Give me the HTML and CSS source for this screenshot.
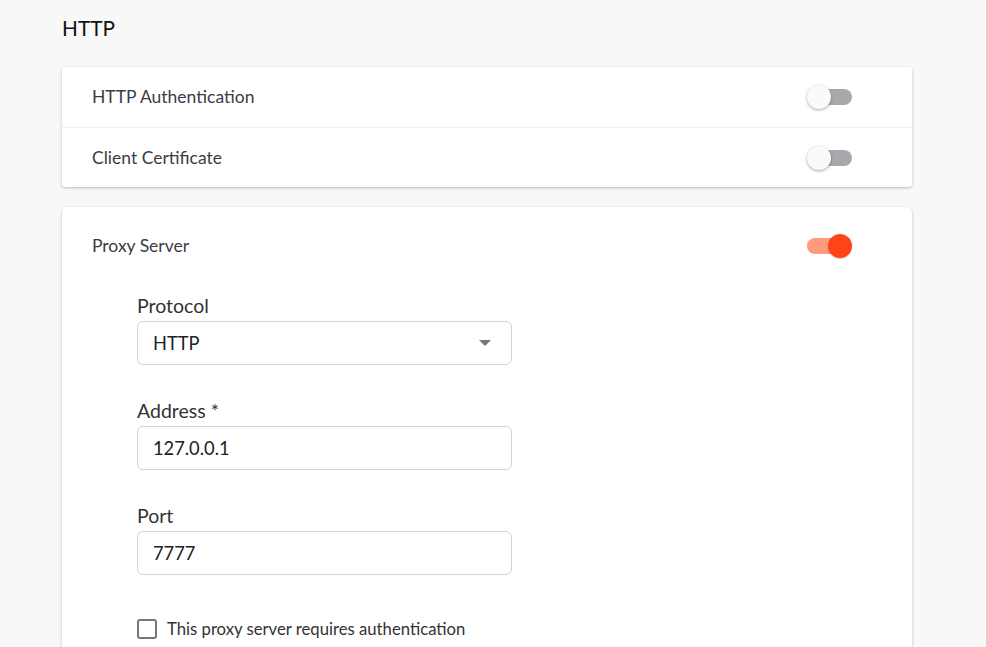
FILE: index.html
```html
<!DOCTYPE html>
<html>
<head>
<meta charset="utf-8">
<link rel="stylesheet" href="styles.css">
</head>
<body>
<div class="page">
  <h1 class="title">HTTP</h1>
  <div class="card">
    <div class="row">
      <span class="row-label">HTTP Authentication</span>
      <span class="toggle"><span class="track"></span><span class="thumb"></span></span>
    </div>
    <div class="row row-sep">
      <span class="row-label">Client Certificate</span>
      <span class="toggle"><span class="track"></span><span class="thumb"></span></span>
    </div>
  </div>
  <div class="card card-proxy">
    <div class="row">
      <span class="row-label">Proxy Server</span>
      <span class="toggle on"><span class="track"></span><span class="thumb"></span></span>
    </div>
    <div class="form">
      <div class="field">
        <label class="field-label">Protocol</label>
        <div class="input select"><span>HTTP</span><span class="caret"></span></div>
      </div>
      <div class="field">
        <label class="field-label">Address *</label>
        <div class="input"><span>127.0.0.1</span></div>
      </div>
      <div class="field">
        <label class="field-label">Port</label>
        <div class="input"><span>7777</span></div>
      </div>
      <div class="check">
        <span class="box"></span>
        <span class="check-label">This proxy server requires authentication</span>
      </div>
    </div>
  </div>
</div>
</body>
</html>
```
FILE: styles.css
```css
html, body {
  margin: 0;
  padding: 0;
  background: #f8f8f8;
  font-family: "Lato", "Liberation Sans", sans-serif;
  overflow: hidden;
}
.page {
  width: 850px;
  padding: 0 0 0 62px;
}
.title {
  margin: 0;
  padding-top: 16px;
  height: 67px;
  box-sizing: border-box;
  font-size: 20.8px;
  font-weight: 400;
  line-height: 24px;
  color: #111;
}
.card {
  background: #fff;
  border-radius: 3px;
  box-shadow: 0 1px 3px rgba(0,0,0,0.25);
  margin-bottom: 20px;
}
.card-proxy {
  border-radius: 5px;
  padding-top: 9px;
  padding-bottom: 40px;
}
.row {
  height: 60px;
  display: flex;
  align-items: center;
  justify-content: space-between;
  padding: 0 60px 0 30px;
}
.row-label {
  font-size: 17.5px;
  line-height: 20px;
  margin-top: 0;
  color: #3c3c46;
}
.row-sep {
  border-top: 1px solid #f0f0f0;
  height: 59px;
}
.toggle {
  position: relative;
  width: 45px;
  height: 24px;
  display: block;
}
.track {
  position: absolute;
  left: 8px;
  right: 0;
  top: 4px;
  height: 16px;
  border-radius: 8px;
  background: #a8a8ad;
}
.thumb {
  position: absolute;
  left: 0;
  top: 0;
  width: 24px;
  height: 24px;
  border-radius: 50%;
  background: #fafafa;
  box-shadow: 0 1px 3px rgba(0,0,0,0.35);
}
.toggle.on .track {
  left: 0;
  right: 8px;
  background: #fd9a80;
}
.toggle.on .thumb {
  left: 21px;
  background: #ff4516;
  box-shadow: 0 1px 2px rgba(0,0,0,0.2);
}
.form {
  padding: 19px 0 0 75px;
}
.field {
  width: 375px;
  margin-bottom: 35px;
}
.field-label {
  display: block;
  font-size: 19.5px;
  line-height: 22px;
  color: #333;
  margin-bottom: 4px;
}
.input {
  height: 44px;
  box-sizing: border-box;
  border: 1px solid #d2d2d2;
  border-radius: 6px;
  display: flex;
  align-items: center;
  justify-content: space-between;
  padding: 0 20px 0 15px;
  font-size: 18.3px;
  color: #222;
}
.caret {
  width: 0;
  height: 0;
  border-left: 6px solid transparent;
  border-right: 6px solid transparent;
  border-top: 6px solid #777;
}
.check {
  display: flex;
  align-items: center;
  margin-top: 44px;
}
.box {
  width: 16px;
  height: 16px;
  border: 2px solid #777;
  border-radius: 3px;
  margin-right: 10px;
}
.check-label {
  font-size: 16.7px;
  color: #333;
}
```
